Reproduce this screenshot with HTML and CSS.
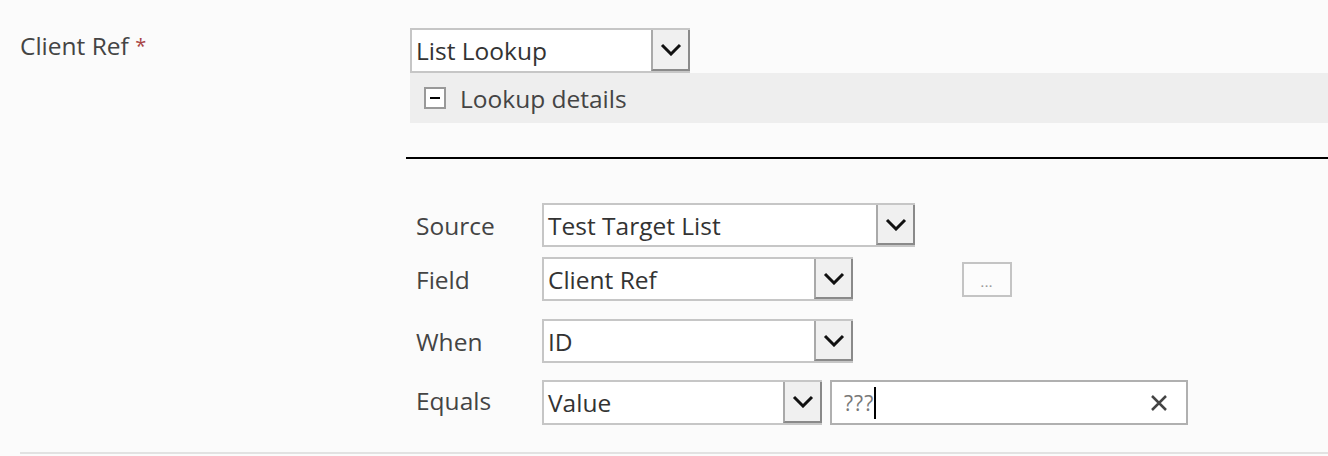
FILE: index.html
```html
<!DOCTYPE html>
<html lang="en">
<head>
    <meta charset="UTF-8">
    <title>Client Ref - Lookup</title>
    <link rel="stylesheet" href="styles.css">
</head>
<body>
    <div class="form-row">
        <div class="form-label">Client Ref <span class="required">*</span></div>
        <div class="form-field">
            <div class="select select-type">
                <span class="select-text">List Lookup</span>
                <span class="select-btn">
                    <svg width="22" height="13" viewBox="0 0 22 13"><polyline points="2,2 11,11 20,2" /></svg>
                </span>
            </div>
            <div class="details-panel">
                <span class="toggle-box"><span class="toggle-minus"></span></span>
                <span>Lookup details</span>
            </div>
            <div class="divider"></div>
            <div class="lookup">
                <div class="lookup-row row-source">
                    <div class="lookup-label">Source</div>
                    <div class="select select-source">
                        <span class="select-text">Test Target List</span>
                        <span class="select-btn">
                            <svg width="22" height="13" viewBox="0 0 22 13"><polyline points="2,2 11,11 20,2" /></svg>
                        </span>
                    </div>
                </div>
                <div class="lookup-row row-field">
                    <div class="lookup-label">Field</div>
                    <div class="select select-field">
                        <span class="select-text">Client Ref</span>
                        <span class="select-btn">
                            <svg width="22" height="13" viewBox="0 0 22 13"><polyline points="2,2 11,11 20,2" /></svg>
                        </span>
                    </div>
                    <button class="more-btn">...</button>
                </div>
                <div class="lookup-row row-when">
                    <div class="lookup-label">When</div>
                    <div class="select select-field">
                        <span class="select-text">ID</span>
                        <span class="select-btn">
                            <svg width="22" height="13" viewBox="0 0 22 13"><polyline points="2,2 11,11 20,2" /></svg>
                        </span>
                    </div>
                </div>
                <div class="lookup-row row-equals">
                    <div class="lookup-label">Equals</div>
                    <div class="select select-value">
                        <span class="select-text">Value</span>
                        <span class="select-btn">
                            <svg width="22" height="13" viewBox="0 0 22 13"><polyline points="2,2 11,11 20,2" /></svg>
                        </span>
                    </div>
                    <div class="text-input">
                        <span class="input-value">???</span><span class="caret"></span>
                        <span class="clear-btn">
                            <svg width="18" height="18" viewBox="0 0 18 18"><path d="M2 2 L16 16 M16 2 L2 16" /></svg>
                        </span>
                    </div>
                </div>
            </div>
        </div>
    </div>
</body>
</html>
```

FILE: styles.css
```css
body {
    margin: 0;
    background-color: #fbfbfb;
    font-family: "Open Sans", "Noto Sans", sans-serif;
    font-size: 24.5px;
    color: #444;
}

.form-row {
    display: flex;
    margin-left: 20px;
    padding-top: 28px;
    padding-bottom: 27px;
    border-bottom: 2px solid #e2e2e2;
}

.form-label {
    width: 390px;
    padding-top: 3px;
    line-height: 30px;
}

.required {
    color: #a84444;
    font-size: 20px;
    vertical-align: 2px;
}

.form-field {
    flex: 1;
}

/* dropdowns */
.select {
    display: flex;
    box-sizing: border-box;
    height: 44px;
    border: 2px solid #c6c6c6;
    background-color: #fff;
    color: #333;
}

.select-text {
    flex: 1;
    padding-left: 4px;
    line-height: 42px;
    white-space: nowrap;
    overflow: hidden;
}

.select-btn {
    width: 35px;
    box-sizing: content-box;
    display: flex;
    align-items: center;
    justify-content: center;
    background-color: #f0f0f0;
    border-left: 2px solid #a9a9a9;
    border-right: 2px solid #8a8a8a;
    border-bottom: 2px solid #8a8a8a;
    margin-right: -2px;
}

.select-btn svg polyline {
    fill: none;
    stroke: #111;
    stroke-width: 3;
}

.select-type {
    width: 280px;
    height: 45px;
}

.select-source {
    width: 373px;
}

.select-field {
    width: 311px;
}

.select-value {
    width: 280px;
}

/* details panel */
.details-panel {
    display: flex;
    align-items: center;
    height: 50px;
    padding-left: 14px;
    background-color: #eeeeee;
}

.toggle-box {
    width: 18px;
    height: 18px;
    border: 2px solid #999;
    background-color: #fff;
    margin-right: 14px;
    display: flex;
    align-items: center;
    justify-content: center;
}

.toggle-minus {
    width: 10px;
    height: 2px;
    background-color: #000;
}

.divider {
    height: 2px;
    margin-top: 34px;
    margin-left: -4px;
    background-color: #000;
}

/* lookup table */
.lookup {
    margin-top: 44px;
    padding-left: 6px;
}

.lookup-row {
    display: flex;
    align-items: center;
    margin-bottom: 17px;
}

.row-source {
    margin-bottom: 10px;
}

.row-field {
    margin-bottom: 18px;
}

.row-equals {
    margin-bottom: 0;
}

.lookup-label {
    width: 126px;
}

.row-equals .lookup-label {
    margin-top: -4px;
}

.row-equals .select,
.text-input {
    height: 45px;
}

.more-btn {
    width: 50px;
    height: 35px;
    margin-left: 109px;
    padding: 0 0 5px;
    border: 2px solid #c4c4c4;
    background-color: #fcfcfc;
    color: #999;
    font-family: "Open Sans", sans-serif;
    font-size: 11px;
    font-weight: bold;
    letter-spacing: 1px;
    display: flex;
    align-items: flex-end;
    justify-content: center;
}

.text-input {
    display: flex;
    align-items: center;
    box-sizing: border-box;
    width: 358px;
    margin-left: 8px;
    padding-left: 12px;
    border: 2px solid #b0b0b0;
    background-color: #fff;
}

.input-value {
    color: #777;
    font-size: 21px;
    letter-spacing: 1px;
}

.caret {
    width: 2px;
    height: 32px;
    background-color: #000;
}

.clear-btn {
    margin-left: auto;
    margin-right: 18px;
    display: flex;
}

.clear-btn svg path {
    stroke: #444;
    stroke-width: 2.5;
}
```
